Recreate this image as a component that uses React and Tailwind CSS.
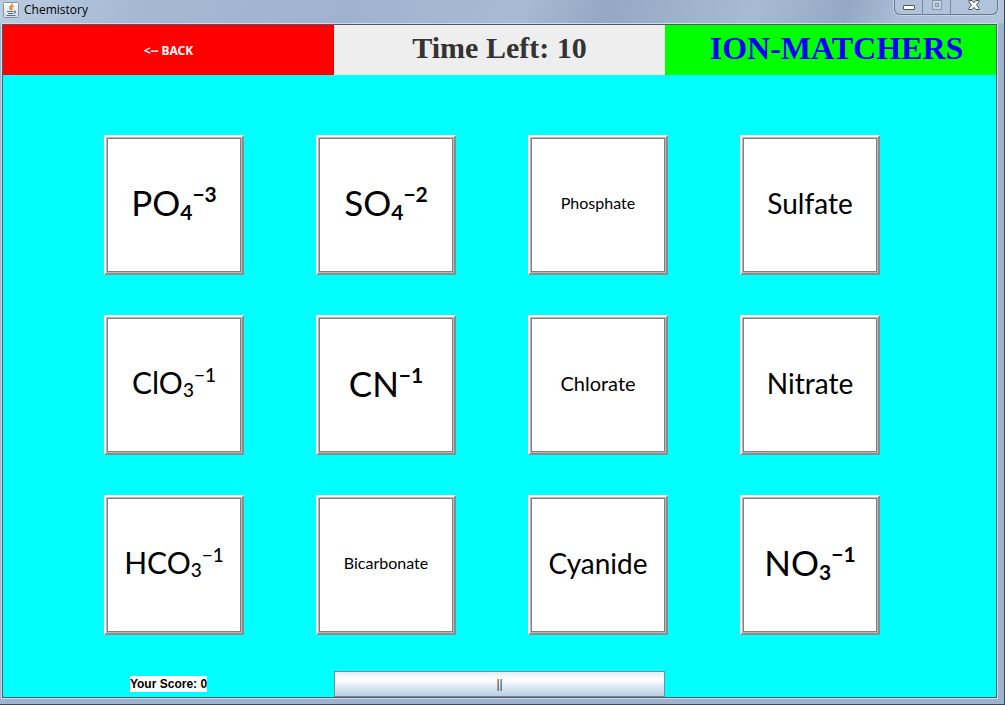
import React from "react";

const LARGE = { text: "text-[35px]", small: "text-[21px] font-bold", sub: "align-[-4px]", sup: "align-[14px]" };
const MEDIUM = { text: "text-[30px]", small: "text-[19px] font-medium", sub: "align-[-3px]", sup: "align-[12px]" };

const CARDS = [
  { base: "PO", sub: "4", sup: "−3", size: LARGE },
  { base: "SO", sub: "4", sup: "−2", size: LARGE },
  { name: "Phosphate", text: "text-[16px]" },
  { name: "Sulfate", text: "text-[28px]" },
  { base: "ClO", sub: "3", sup: "−1", size: MEDIUM },
  { base: "CN", sup: "−1", size: LARGE },
  { name: "Chlorate", text: "text-[20px]" },
  { name: "Nitrate", text: "text-[28px]" },
  { base: "HCO", sub: "3", sup: "−1", size: MEDIUM },
  { name: "Bicarbonate", text: "text-[16px]" },
  { name: "Cyanide", text: "text-[28px]" },
  { base: "NO", sub: "3", sup: "−1", size: LARGE },
];

function Formula({ base, sub, sup, size }) {
  return (
    <span className={`pb-0.5 whitespace-nowrap leading-none ${size.text}`}>
      {base}
      {sub && <sub className={`static leading-none ${size.small} ${size.sub}`}>{sub}</sub>}
      <sup className={`static leading-none ${size.small} ${size.sup}`}>{sup}</sup>
    </span>
  );
}

function Card({ card }) {
  return (
    <button
      type="button"
      className="size-[140px] border-2 border-t-white border-l-white border-r-[#8c8c8c] border-b-[#8c8c8c] bg-[#b8b8b8] font-[Lato,sans-serif] text-black"
    >
      <span className="flex size-full items-center justify-center border border-[#b8b8b8]">
        <span className="flex size-full items-center justify-center border border-[#808080] bg-white pb-1">
          {card.name ? <span className={card.text}>{card.name}</span> : <Formula {...card} />}
        </span>
      </span>
    </button>
  );
}

function JavaIcon() {
  return (
    <svg viewBox="0 0 16 16" className="size-4" aria-hidden="true">
      <defs>
        <linearGradient id="tile" x1="0" y1="0" x2="0" y2="1">
          <stop offset="0" stopColor="#ffffff" />
          <stop offset="1" stopColor="#d3dce4" />
        </linearGradient>
      </defs>
      <rect x=".5" y=".5" width="15" height="15" rx="1" fill="url(#tile)" stroke="#8095a8" />
      <path d="M9 1.5c1 1.8-3.4 2.700-2.200 4.600.4.7 1 1 .8 1.900M10.800 3.800C8.900 4.700 8 5.300 8.900 6.500c.4.6 0 1.100-.5 1.500" fill="none" stroke="#ea7f25" strokeWidth="1.400" />
      <path d="M4 9.500h6.500M5 11.500h5M11 9c2-.3 2.200 1.800-.2 2.400M3.500 13.500h9" fill="none" stroke="#4f7795" strokeWidth="1.100" />
    </svg>
  );
}

function WindowControls() {
  const button = "flex items-start justify-center border-r border-[#79899f] last:border-r-0";
  return (
    <div className="flex h-[15px] overflow-hidden rounded-b-md border border-t-0 border-[#68788f] bg-[#b1c3da] shadow-[0_0_0_1px_#c4d2e5]">
      <button type="button" aria-label="Minimize" className={`w-7 ${button}`}>
        <svg viewBox="0 0 14 12" className="h-3 w-3.5">
          <rect x="1.500" y="5.500" width="11" height="4" rx=".5" fill="#fff" stroke="#4e5767" />
        </svg>
      </button>
      <button type="button" aria-label="Maximize" disabled className={`w-7 ${button}`}>
        <svg viewBox="0 0 14 12" className="h-3 w-3.5">
          <rect x="2.500" y=".5" width="9" height="9" fill="#c5d2e2" stroke="#8798ad" />
          <rect x="5.500" y="3.500" width="3" height="3" fill="#b1c3da" stroke="#8798ad" />
        </svg>
      </button>
      <button type="button" aria-label="Close" className={`w-[46px] ${button}`}>
        <svg viewBox="0 0 14 12" className="h-3 w-3.5">
          <path d="M2 .5h3l2 2.200 2-2.200h3v1.500L9.500 5l2.800 3.500v1H9L7 7.300 5 9.500H1.700v-1L4.500 5 2 2z" fill="#fff" stroke="#4b5361" strokeLinejoin="round" />
        </svg>
      </button>
    </div>
  );
}

export default function App() {
  return (
    <div className="flex min-h-screen flex-col border-r border-b border-[#3d4654] bg-[#a3b5d1] font-['Liberation_Sans',sans-serif]">
      <header className="flex h-[23px] items-start justify-between bg-linear-[110deg,#bccce1_0%,#a4b7d3_15%,#9fb3d1_35%,#a8bad4_52%,#94a8c6_60%,#a8bbd5_75%,#94a8c6_84%,#adbfd8_90%,#b3c5db_100%] pr-1.5 pl-[3px]">
        <div className="flex h-5 items-center gap-[5px]">
          <JavaIcon />
          <h1 className="font-['Open_Sans',sans-serif] text-[12px] leading-4 text-black">Chemistory</h1>
        </div>
        <WindowControls />
      </header>
      <div className="flex grow flex-col border-r-[6px] border-b-[5px] border-l border-[#9fb3cf]">
        <div className="flex grow flex-col border border-[#d0dcea]">
          <main className="flex grow flex-col border-t border-r border-b border-[#4d5968] bg-[#00ffff]">
            <div className="grid h-[50px] grid-cols-3 border-l border-[#4d5968]">
              <button type="button" className="bg-[#ff0000] pt-0.5 font-['Noto_Sans',sans-serif] text-[12px] font-bold text-white">
                &lt;-- BACK
              </button>
              <div className="flex items-center justify-center bg-[#eeeeee] pb-1 font-['Liberation_Serif',serif] text-[30px] leading-none font-bold text-[#333333]">
                Time Left: 10
              </div>
              <h2 className="flex items-center justify-center bg-[#00ff00] pb-1 pl-3 font-['Liberation_Serif',serif] text-[32px] leading-none font-bold text-[#0000ff]">
                ION-MATCHERS
              </h2>
            </div>
            <section className="grid grow grid-cols-4 content-center justify-items-center gap-y-10 border-l border-[#4d5968] pt-6 pr-20 pl-[65px]">
              {CARDS.map((card) => (
                <Card key={card.name || card.base} card={card} />
              ))}
            </section>
            <footer className="grid grid-cols-3 border-l border-[#4d5968]">
              <div className="flex items-center justify-center">
                <span className="bg-white text-[12px] leading-4 font-bold text-black">Your Score: 0</span>
              </div>
              <button type="button" aria-label="Pause" className="h-[26px] border border-[#7a8a99] bg-linear-to-b from-[#e3edf5] via-white via-30% to-[#b8cfe5] text-[12px] text-[#333333]">
                ||
              </button>
            </footer>
          </main>
        </div>
      </div>
    </div>
  );
}
